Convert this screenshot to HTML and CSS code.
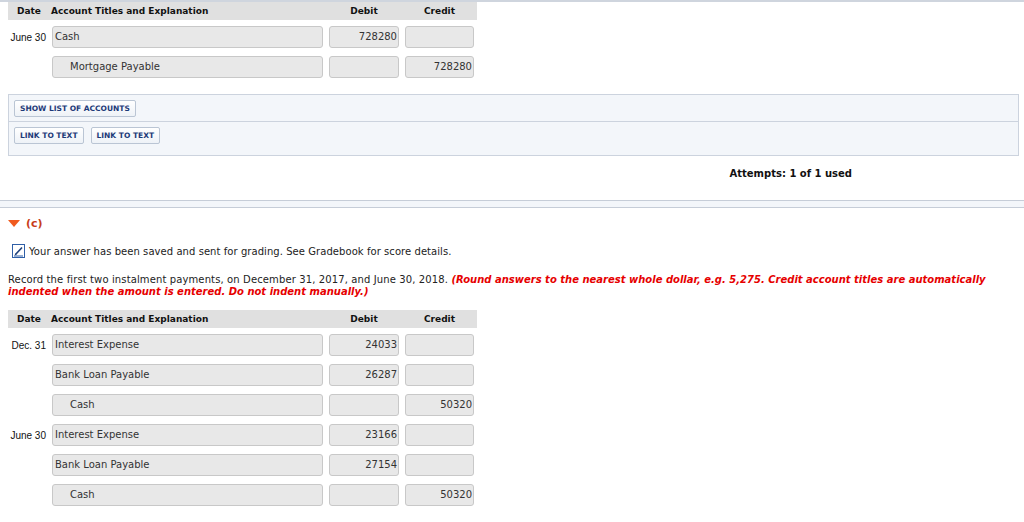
FILE: index.html
```html
<!DOCTYPE html>
<html lang="en">
<head>
  <meta charset="UTF-8">
  <title>Journal Entry</title>
  <link rel="stylesheet" href="styles.css">
</head>
<body>
  <div class="top-rule"></div>

  <!-- Part (b) journal -->
  <div class="journal">
    <div class="journal-head">
      <div class="col-date">Date</div>
      <div class="col-account">Account Titles and Explanation</div>
      <div class="col-num">Debit</div>
      <div class="col-num">Credit</div>
    </div>
    <div class="journal-row">
      <div class="date">June 30</div>
      <div class="field">Cash</div>
      <div class="field num">728280</div>
      <div class="field num"></div>
    </div>
    <div class="journal-row">
      <div class="date"></div>
      <div class="field indent">Mortgage Payable</div>
      <div class="field num"></div>
      <div class="field num">728280</div>
    </div>
  </div>

  <div class="tools">
    <div class="tools-row">
      <button class="tool-btn">Show List of Accounts</button>
    </div>
    <div class="tools-row">
      <button class="tool-btn">Link to Text</button>
      <button class="tool-btn">Link to Text</button>
    </div>
  </div>

  <div class="attempts">Attempts: 1 of 1 used</div>

  <div class="band"></div>

  <!-- Part (c) -->
  <div class="part-title">
    <span class="caret"></span>
    <span>(c)</span>
  </div>

  <div class="saved">
    <svg class="saved-icon" width="13" height="14" viewBox="0 0 13 14">
      <rect x="0.5" y="0.5" width="12" height="13" fill="#fff" stroke="#2f5fa7"/>
      <path d="M3.5 10.5 L10 3.5" stroke="#1d3f7a" stroke-width="1.6"/>
      <path d="M2.5 11.5 L3.3 9.5 L4.6 10.7 Z" fill="#1d3f7a"/>
      <path d="M2 12 H11" stroke="#2f5fa7" stroke-width="1"/>
    </svg>
    <span>Your answer has been saved and sent for grading. See Gradebook for score details.</span>
  </div>

  <p class="prompt">Record the first two instalment payments, on December 31, 2017, and June 30, 2018. <em class="note">(Round answers to the nearest whole dollar, e.g. 5,275. Credit account titles are automatically indented when the amount is entered. Do not indent manually.)</em></p>

  <div class="journal">
    <div class="journal-head">
      <div class="col-date">Date</div>
      <div class="col-account">Account Titles and Explanation</div>
      <div class="col-num">Debit</div>
      <div class="col-num">Credit</div>
    </div>
    <div class="journal-row">
      <div class="date">Dec. 31</div>
      <div class="field">Interest Expense</div>
      <div class="field num">24033</div>
      <div class="field num"></div>
    </div>
    <div class="journal-row">
      <div class="date"></div>
      <div class="field">Bank Loan Payable</div>
      <div class="field num">26287</div>
      <div class="field num"></div>
    </div>
    <div class="journal-row">
      <div class="date"></div>
      <div class="field indent">Cash</div>
      <div class="field num"></div>
      <div class="field num">50320</div>
    </div>
    <div class="journal-row">
      <div class="date">June 30</div>
      <div class="field">Interest Expense</div>
      <div class="field num">23166</div>
      <div class="field num"></div>
    </div>
    <div class="journal-row">
      <div class="date"></div>
      <div class="field">Bank Loan Payable</div>
      <div class="field num">27154</div>
      <div class="field num"></div>
    </div>
    <div class="journal-row">
      <div class="date"></div>
      <div class="field indent">Cash</div>
      <div class="field num"></div>
      <div class="field num">50320</div>
    </div>
  </div>
</body>
</html>
```

FILE: styles.css
```css
/* General */
body {
  margin: 0;
  font-family: "DejaVu Sans", Verdana, sans-serif;
  font-size: 10px;
  color: #222;
  background: #fff;
}

.top-rule {
  height: 2px;
  background: #cfd5de;
}

/* Journal table */
.journal {
  width: 469px;
  margin-left: 8px;
}

.journal-head,
.journal-row {
  display: grid;
  grid-template-columns: 38px 271px 70px 69px;
  column-gap: 6px;
  align-items: center;
}

.journal-head {
  height: 18px;
  background: #e0e0e0;
  font-size: 9px;
  font-weight: bold;
  color: #111;
}

.col-date {
  text-align: center;
  padding-left: 4px;
}

.col-account {
  margin-left: -1px;
}

.col-num {
  text-align: center;
}

.journal-row {
  margin-top: 6px;
}

.journal-row + .journal-row {
  margin-top: 8px;
}

.date {
  font-family: "Liberation Sans", Arial, sans-serif;
  font-size: 10px;
  color: #111;
  text-align: right;
}

.field {
  box-sizing: border-box;
  height: 22px;
  line-height: 20px;
  padding: 0 2px;
  background: #e8e8e8;
  border: 1px solid #c8c8c8;
  border-radius: 3px;
  color: #333;
  white-space: nowrap;
  overflow: hidden;
}

.field.indent {
  padding-left: 17px;
}

.field.num {
  text-align: right;
  padding-right: 1px;
}

/* Tool buttons panel */
.tools {
  margin: 16px 5px 0 8px;
  background: #f3f6fa;
  border: 1px solid #ccd3de;
}

.tools-row {
  display: flex;
  gap: 7px;
  padding: 5px 5px 4px;
}

.tools-row + .tools-row {
  border-top: 1px solid #ccd3de;
  padding-bottom: 11px;
}

.tool-btn {
  height: 17px;
  padding: 0 5px;
  font-family: "DejaVu Sans", Verdana, sans-serif;
  font-size: 7.5px;
  font-weight: bold;
  text-transform: uppercase;
  color: #1d3a78;
  background: linear-gradient(#ffffff, #eef2f7);
  border: 1px solid #bac5d4;
  border-radius: 2px;
}

.attempts {
  margin-top: 12px;
  padding-right: 172px;
  text-align: right;
  font-weight: bold;
  color: #111;
  line-height: 12px;
}

.band {
  margin-top: 20px;
  height: 6px;
  background: #f3f6fa;
  border-top: 1px solid #c6cdd8;
  border-bottom: 1px solid #c6cdd8;
}

/* Part (c) */
.part-title {
  display: flex;
  align-items: center;
  gap: 6px;
  margin: 9px 0 0 8px;
  height: 12px;
  font-size: 11px;
  font-weight: bold;
  color: #c8401a;
}

.caret {
  width: 0;
  height: 0;
  border-left: 6px solid transparent;
  border-right: 6px solid transparent;
  border-top: 7px solid #f05a1e;
}

.saved {
  display: flex;
  align-items: center;
  gap: 4px;
  margin: 15px 0 0 12px;
  color: #222;
  letter-spacing: 0.06px;
}

.saved-icon {
  display: block;
}

.prompt {
  margin: 16px 8px 0;
  line-height: 12px;
  color: #222;
  letter-spacing: 0.12px;
}

.note {
  font-weight: bold;
  color: #e60000;
  letter-spacing: 0;
}

.prompt + .journal {
  margin-top: 12px;
}
```
